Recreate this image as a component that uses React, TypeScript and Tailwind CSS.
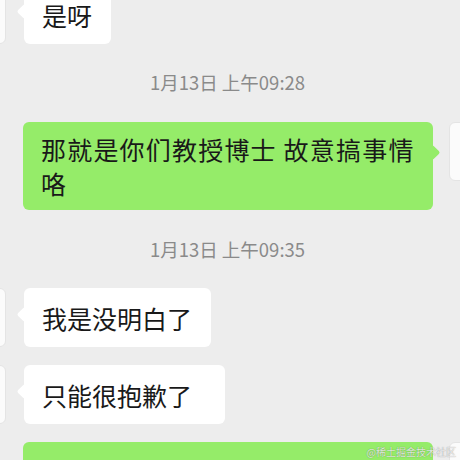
import React from 'react';

const FONT = { fontFamily: '"Noto Sans CJK SC", "Noto Sans", sans-serif' };

type Msg =
  | { kind: 'time'; text: string; cls: string }
  | { kind: 'in'; text: string; cls: string; pad?: string }
  | { kind: 'out'; text: string; cls: string; wide?: boolean };

const MESSAGES: Msg[] = [
  { kind: 'in', text: '是呀', cls: 'mt-[-15px]' },
  { kind: 'time', text: '1月13日 上午09:28', cls: 'mt-[22px] mb-[22px]' },
  { kind: 'out', text: '那就是你们教授博士 故意搞事情咯', cls: '' },
  { kind: 'time', text: '1月13日 上午09:35', cls: 'mt-[23px] mb-[21px]' },
  { kind: 'in', text: '我是没明白了', cls: '' },
  { kind: 'in', text: '只能很抱歉了', cls: 'mt-[18px]', pad: 'pr-[33px]' },
  { kind: 'out', text: '', cls: 'mt-[18px]', wide: true }
];

function Avatar() {
  return <div className="w-[59px] h-[59px] shrink-0 rounded-[6px] bg-[#fbfbfb] border border-[#e4e4e4]" />;
}

function Incoming({ text, cls, pad }: { text: string; cls: string; pad?: string }) {
  return (
    <div className={`flex items-start ml-[-53px] ${cls}`}>
      <Avatar />
      <div className={`relative ml-[18px] max-w-[410px] min-h-[59px] flex items-center rounded-[6px] bg-white pl-[18px] py-[12px] ${pad ?? 'pr-[19px]'}`}>
        <div className="absolute left-[-5px] top-[21px] w-[11px] h-[11px] rotate-45 rounded-[2px] bg-white" />
        <span className="relative text-[25px] leading-[34px] text-[#191919]">{text}</span>
      </div>
    </div>
  );
}

function Outgoing({ text, cls, wide }: { text: string; cls: string; wide?: boolean }) {
  return (
    <div className={`flex items-start justify-end mr-[-48px] ${cls}`}>
      <div className={`relative mr-[16px] max-w-[410px] min-h-[59px] flex items-center rounded-[6px] bg-[#95ec69] pl-[18px] pr-[15px] py-[10px] ${wide ? 'w-[410px]' : ''}`}>
        <div className="absolute right-[-5px] top-[25px] w-[11px] h-[11px] rotate-45 rounded-[2px] bg-[#95ec69]" />
        <span className="relative text-[25px] leading-[34px] tracking-[1.2px] text-[#191919] break-all">{text}</span>
      </div>
      <Avatar />
    </div>
  );
}

export default function App() {
  return (
    <div className="relative w-[460px] h-[460px] overflow-hidden bg-[#ededed]" style={FONT}>
      <div className="flex flex-col">
        {MESSAGES.map((m, i) => {
          if (m.kind === 'time') {
            return (
              <div key={i} className={`h-[34px] flex items-center justify-center pr-[5px] text-[18.5px] text-[#8a8a8a] ${m.cls}`}>
                {m.text}
              </div>
            );
          }
          if (m.kind === 'in') return <Incoming key={i} text={m.text} cls={m.cls} pad={m.pad} />;
          return <Outgoing key={i} text={m.text} cls={m.cls} wide={m.wide} />;
        })}
      </div>

      <div className="absolute right-[4px] bottom-[2px] text-[10px] leading-[12px] text-white/80 [text-shadow:0_0_1px_rgba(0,0,0,0.5)]">
        @稀土掘金技术社区
      </div>
    </div>
  );
}
